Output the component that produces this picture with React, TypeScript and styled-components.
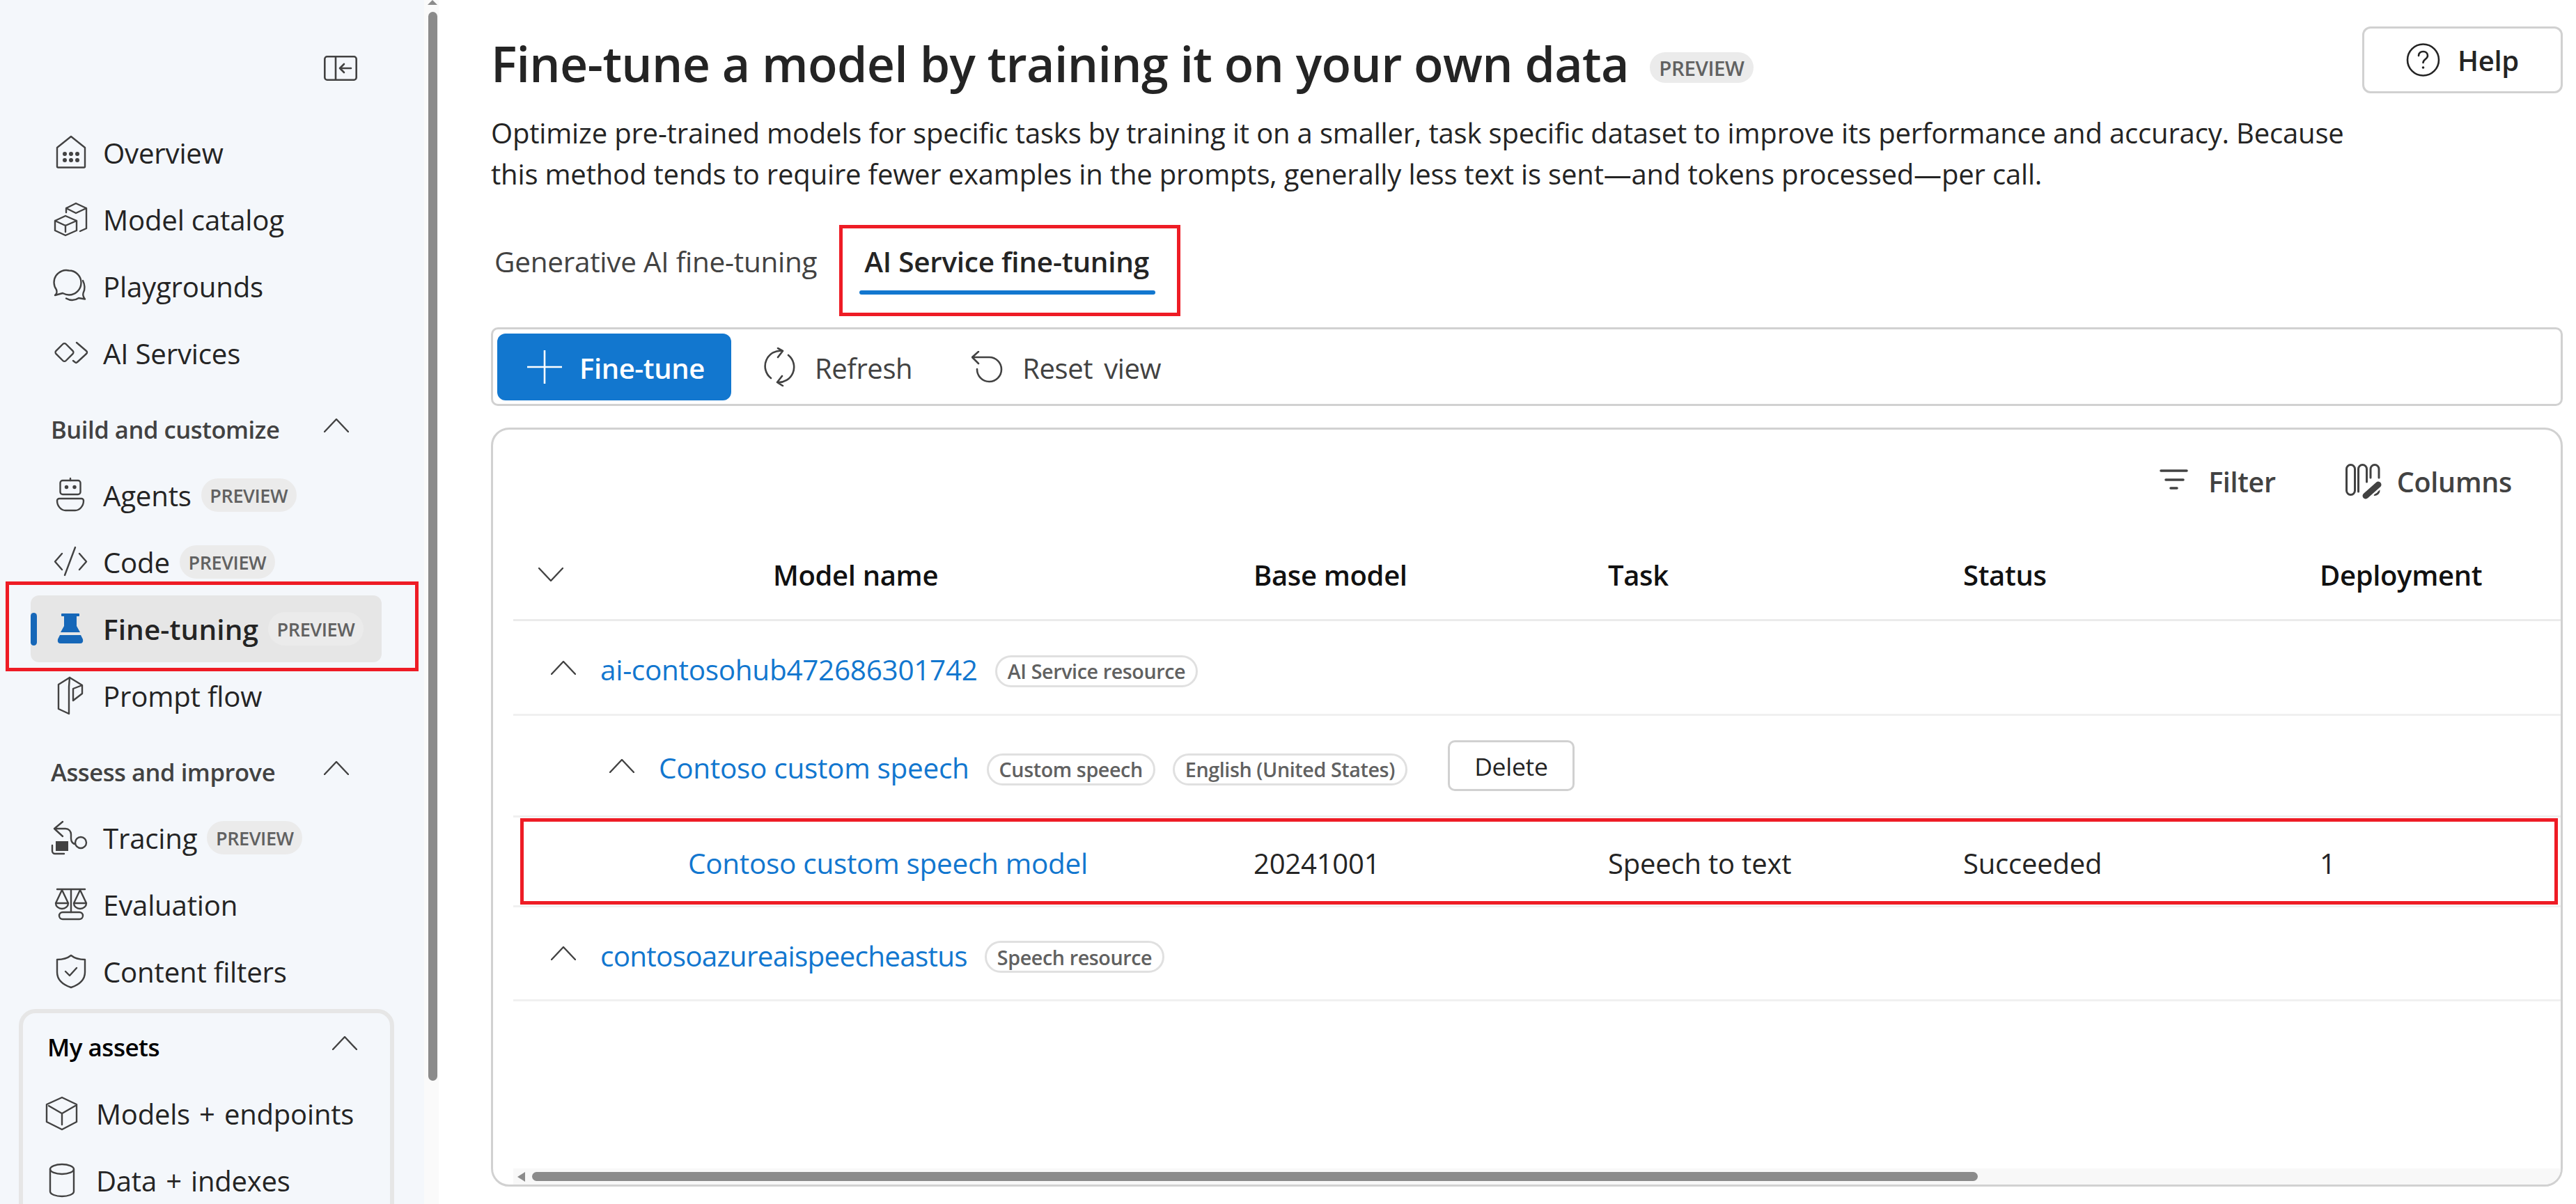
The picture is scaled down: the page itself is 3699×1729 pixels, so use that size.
import React from "react";
import styled, { createGlobalStyle, css } from "styled-components";

const Global = createGlobalStyle`
  html, body { margin: 0; padding: 0; background: #fff; overflow: hidden; }
  * { box-sizing: border-box; }
  body { font-family: "Open Sans", "Noto Sans", "Liberation Sans", sans-serif; color: #242424; }
`;

const Page = styled.div`
  position: relative; width: 3699px; height: 1729px; display: flex; overflow: hidden; background: #fff;
`;
const Sidebar = styled.aside`
  flex: 0 0 609px; height: 100%; background: #f4f7fb; overflow: hidden; display: flex; flex-direction: column;
`;
const SideTop = styled.div`
  height: 171px; padding: 80px 0 0 465px; flex: none;
`;
const NavList = styled.nav`
  display: flex; flex-direction: column; padding-left: 44px; flex: none;
`;
const NavItem = styled.div<{ $active?: boolean }>`
  flex: none; display: flex; align-items: center; gap: 22px; width: 504px; height: 96px; padding-left: 34px;
  position: relative; border-radius: 12px; white-space: nowrap;
  font-size: ${p => (p.$active ? "40.5px" : "40.2px")};
  letter-spacing: ${p => (p.$active ? "0.1px" : "-0.2px")};
  font-weight: ${p => (p.$active ? 600 : 400)};
  background: ${p => (p.$active ? "#e6e6e6" : "transparent")};
  svg { flex: none; }
`;
const ActiveBar = styled.span`
  position: absolute; left: 0; top: 25px; width: 9px; height: 47px; border-radius: 5px; background: #1667b8;
`;
const Preview = styled.span`
  display: inline-flex; align-items: center; justify-content: center; height: 48px; width: 137px; margin-left: -8px;
  border-radius: 24px; background: #ebebeb; color: #616161; font-size: 27px; font-weight: 600; letter-spacing: -0.4px;
`;
const SectionHead = styled.div<{ $h: number }>`
  flex: none; height: ${p => p.$h}px; padding: 14px 0 0 29px; width: 504px; display: flex; align-items: center; gap: 0;
  color: #424242; font-size: 34.6px; font-weight: 600; letter-spacing: -0.45px; position: relative;
  span { flex: 0 0 392px; }
  svg { margin-bottom: 10px; }
`;
const AssetsBox = styled.section`
  flex: none; margin: 6px 0 0 27px; width: 539px; height: 400px; border: 6px solid #e6e6e6; border-radius: 24px;
  padding: 0 0 0 32px;
`;
const AssetsHead = styled.div`
  height: 96px; display: flex; align-items: center; padding-left: 3px; color: #000; font-size: 35px; font-weight: 600;
  letter-spacing: -0.5px;
  span { flex: 0 0 409px; }
  svg { margin-bottom: 10px; }
`;
const AssetItem = styled.div`
  height: 96px; display: flex; align-items: center; gap: 25px; font-size: 40px; letter-spacing: -0.2px; word-spacing: 3px; white-space: nowrap;
`;
const VScroll = styled.div`
  flex: 0 0 21px; height: 100%; background: #fafafa; padding: 0 2px 0 5px; display: flex; flex-direction: column; align-items: center;
`;
const VArrow = styled.span`
  width: 0; height: 0; flex: none; border-left: 7px solid transparent; border-right: 7px solid transparent;
  border-bottom: 7px solid #8b8b8b; margin-bottom: 10px;
`;
const VThumb = styled.span`
  width: 13px; height: 1535px; background: #8b8b8b; border-radius: 7px; flex: none;
`;

const Main = styled.main`
  flex: 1; min-width: 0; padding: 38px 19px 0 75px; display: flex; flex-direction: column;
`;
const Head = styled.header`
  display: flex; justify-content: space-between; align-items: flex-start; flex: none;
`;
const TitleRow = styled.div`
  display: flex; align-items: center; gap: 30px; height: 105px;
`;
const Title = styled.h1`
  margin: 0; font-size: 69.8px; font-weight: 600; letter-spacing: -0.65px; color: #242424; white-space: nowrap;
`;
const TitleChip = styled.span`
  display: inline-flex; align-items: center; justify-content: center; width: 149px; height: 44px; border-radius: 22px;
  background: #ebebeb; color: #616161; font-size: 29.5px; font-weight: 600; letter-spacing: -0.4px; margin-top: 13px;
`;
const Description = styled.p`
  margin: 18px 0 0; font-size: 40px; line-height: 59px; color: #242424; white-space: nowrap; letter-spacing: -0.17px;
`;
const HelpButton = styled.button`
  flex: none; width: 288px; height: 96px; border: 3px solid #d1d1d1; border-radius: 12px; background: #fff;
  display: flex; align-items: center; justify-content: center; gap: 25px; font: 600 40px "Open Sans", sans-serif; color: #242424; letter-spacing: -0.3px;
`;
const Tabs = styled.div`
  display: flex; gap: 54px; margin: 60px 0 0 -2px; height: 84px; flex: none;
`;
const Tab = styled.div<{ $active?: boolean }>`
  position: relative; padding: 0 7px; height: 76px; line-height: 74px; font-size: 40.5px; letter-spacing: -0.27px; white-space: nowrap;
  color: ${p => (p.$active ? "#242424" : "#424242")};
  font-weight: ${p => (p.$active ? 600 : 400)};
  ${p => p.$active && css`
    &::after { content: ""; position: absolute; left: 0; right: -2px; bottom: -8px; height: 6px; border-radius: 3px; background: #1277cf; }
  `}
`;
const Toolbar = styled.div`
  flex: none; margin-top: 47px; height: 113px; border: 3px solid #d1d1d1; border-radius: 10px; padding: 6px; display: flex; align-items: center;
`;
const PrimaryButton = styled.button`
  flex: none; width: 336px; height: 96px; border: 0; border-radius: 12px; background: #1277cf; color: #fff; margin-right: 47px;
  display: flex; align-items: center; padding: 0 0 0 43px; gap: 25px; font: 600 40px "Open Sans", sans-serif; letter-spacing: -0.4px;
`;
const ToolButton = styled.button`
  flex: none; border: 0; background: none; padding: 0; margin-right: 85px; display: flex; align-items: center; gap: 27px;
  font: 500 40px "Open Sans", sans-serif; color: #424242; letter-spacing: -0.4px; word-spacing: 6px;
`;
const ToolLabel = styled.span`
  margin-top: 3px;
`;
const Card = styled.section`
  flex: none; margin-top: 31px; height: 1090px; border: 3px solid #d1d1d1; border-radius: 26px; padding-left: 29px;
  display: flex; flex-direction: column; overflow: hidden;
`;
const CardTools = styled.div`
  flex: none; height: 144px; padding: 47px 70px 0 0; display: flex; justify-content: flex-end; align-items: flex-start; gap: 100px;
`;
const CardTool = styled.div`
  height: 56px; display: flex; align-items: center; color: #424242; font-size: 39.5px; font-weight: 600; letter-spacing: -0.3px; gap: 22px;
`;
const FilterGlyph = styled.svg`
  margin: -6px 7px 0 0;
`;
const columns = "1063px 509px 510px 512px 1fr";
const HeaderRow = styled.div`
  flex: none; height: 131px; display: grid; grid-template-columns: ${columns}; align-items: center;
  border-bottom: 3px solid #ebebeb; font-size: 40px; font-weight: 600; color: #111; letter-spacing: -0.35px;
`;
const HeaderFirst = styled.div`
  display: flex; align-items: center; padding-left: 36px; gap: 301px;
`;
const GroupRow = styled.div<{ $indent: number; $h: number }>`
  flex: none; height: ${p => p.$h}px; padding: 6px 0 0 ${p => p.$indent}px; display: flex; align-items: center; border-bottom: 3px solid #f0f0f0;
  svg { flex: none; margin: -6px 35px 0 0; }
`;
const ModelRow = styled.div`
  flex: none; height: 129px; padding-top: 5px; display: grid; grid-template-columns: ${columns}; align-items: center;
  border-bottom: 3px solid #f0f0f0; font-size: 40px; letter-spacing: -0.2px; color: #242424;
`;
const LinkText = styled.a<{ $first?: boolean; $tight?: boolean }>`
  color: #1277cf; font-size: 40.5px; letter-spacing: ${p => (p.$tight ? "-0.75px" : "-0.3px")}; white-space: nowrap;
  ${p => p.$first && css`padding-left: 251px;`}
`;
const Chip = styled.span`
  flex: none; display: inline-flex; align-items: center; height: 46px; padding: 0 15px; margin: 4px 0 0 25px;
  border: 3px solid #e0e0e0; border-radius: 23px; font-size: 28.7px; font-weight: 600; color: #616161; letter-spacing: -0.4px; white-space: nowrap;
`;
const DeleteButton = styled.button`
  flex: none; width: 182px; height: 73px; margin: -6px 0 0 58px; border: 3px solid #d1d1d1; border-radius: 10px; background: #fff;
  font: 500 35.5px "Open Sans", sans-serif; color: #242424; letter-spacing: -0.3px;
`;
const HScroll = styled.div`
  margin-top: auto; flex: none; height: 23px; background: #f8f8f8; display: flex; align-items: center; padding-left: 6px; gap: 10px;
`;
const HArrow = styled.span`
  width: 0; height: 0; border-top: 7px solid transparent; border-bottom: 7px solid transparent; border-right: 11px solid #8b8b8b;
`;
const HThumb = styled.span`
  width: 2076px; height: 13px; border-radius: 7px; background: #8b8b8b;
`;

const highlight = css`
  position: absolute; border: 5px solid #ee1c25; pointer-events: none;
`;
const NavHighlight = styled.div`${highlight} left: 8px; top: 835px; width: 593px; height: 129px;`;
const TabHighlight = styled.div`${highlight} left: 1205px; top: 323px; width: 490px; height: 131px;`;
const RowHighlight = styled.div`${highlight} left: 747px; top: 1175px; width: 2926px; height: 124px;`;

type IconProps = { children: React.ReactNode };
const IconSvg = styled.svg`
  overflow: visible;
`;
const Ico = ({ children }: IconProps) => (
  <IconSvg width="48" height="48" viewBox="0 0 48 48" fill="none" stroke="#424242" strokeWidth="2.4" strokeLinejoin="round" strokeLinecap="round">
    {children}
  </IconSvg>
);
const Chevron = ({ down }: { down?: boolean }) => (
  <svg width="36" height="20" viewBox="0 0 36 20" fill="none" stroke="#424242" strokeWidth="2.4" strokeLinecap="round" strokeLinejoin="round">
    <path d={down ? "M1 1 L18 19 L35 1" : "M1 19 L18 1 L35 19"} />
  </svg>
);

const icons: Record<string, React.ReactNode> = {
  overview: (
    <>
      <path d="M24 1 L44 17 V44 a1.5 1.5 0 0 1 -1.5 1.5 H5.500 a1.5 1.5 0 0 1 -1.5 -1.500 V17 Z" />
      <g fill="#424242" stroke="none">
        <circle cx="15" cy="26" r="3" /><circle cx="24" cy="26" r="3" /><circle cx="33" cy="26" r="3" />
        <circle cx="15" cy="35" r="3" /><circle cx="24" cy="35" r="3" /><circle cx="33" cy="35" r="3" />
      </g>
    </>
  ),
  catalog: (
    <>
      <path d="M16 19 L1 26 V40 L16 47 L32 40 V26 Z M1 26 L16 33 L32 26 M16 33 V42" />
      <path d="M17 14 V8 L31 1 L46 8 V37 L37 41 M17 8 L31 15 L46 8" />
    </>
  ),
  playgrounds: (
    <>
      <path d="M21 1.500 a17.500 17.500 0 0 1 0 35 c-3 0 -6 -1 -9 -2.500 L1 37 c2.500 -2 3 -5 2 -8 A17.500 17.500 0 0 1 21 1.500 Z" />
      <path d="M41 16 c3 6 3.500 12 .5 18 c-.7 2.500 -.3 5 2.500 8.500 l-9 -1.500 c-6 4 -12 4 -18 .5" />
    </>
  ),
  services: (
    <>
      <rect x="4.500" y="13" width="20" height="20" rx="3" transform="rotate(45 14.500 23)" />
      <path d="M32 9 L46 21 a2.500 2.500 0 0 1 0 4 L33 37 a2.500 2.500 0 0 1 -3.500 0 L27 35" />
    </>
  ),
  agents: (
    <>
      <rect x="8.500" y="3" width="29" height="20" rx="3.500" />
      <path d="M23 0 V3" />
      <circle cx="17.500" cy="12.500" r="2.700" fill="#424242" stroke="none" />
      <circle cx="29" cy="12.500" r="2.700" fill="#424242" stroke="none" />
      <path d="M7 29 H39 a3 3 0 0 1 3 3 c0 8 -6 14 -12 14 H16 C10 46 4 40 4 32 a3 3 0 0 1 3 -3 Z" />
    </>
  ),
  code: <path d="M11 12 L1 23.500 L11 35 M30 3 L15 43 M36 12 L46 23.500 L36 35" />,
  flask: (
    <g fill="#1667b8" stroke="none">
      <rect x="10" y="2" width="26" height="4" rx="1" />
      <path d="M14 6 H32 V20 L37 29 H9 L14 20 Z" />
      <path d="M8 33 H38 L41 39 Q42 45 37 45 H9 Q4 45 5 39 Z" />
    </g>
  ),
  prompt: (
    <>
      <path d="M22 -2 L6 8 V43 L21 50 V11 Z" />
      <path d="M22 -2 L40 9 V21 L27 31 V14 L40 9" />
    </>
  ),
  tracing: (
    <>
      <path d="M12 1 L0 11 L12 22 M0 11 H16 c5 0 8 4 8 8 V25 c0 5 3 8 6 8" />
      <circle cx="38" cy="31" r="8" />
      <rect x="2" y="29" width="18" height="14" fill="#424242" stroke="none" />
      <path d="M-3 35 V43 a4 4 0 0 0 4 4 H14" />
    </>
  ),
  evaluation: (
    <>
      <path d="M4 2 H44 M24 2 V35" />
      <path d="M11 3 L2 22 H20 Z M2 22 a9 8 0 0 0 18 0" />
      <path d="M37 3 L28 22 H46 Z M28 22 a9 8 0 0 0 18 0" />
      <rect x="7" y="35" width="34" height="10" rx="5" />
    </>
  ),
  shield: (
    <>
      <path d="M24 1 C29 5 36 7 44 7 V25 C44 36 36 43 24 47 C12 43 4 36 4 25 V7 C12 7 19 5 24 1 Z" />
      <path d="M16 24 L22 30 L32 19" />
    </>
  ),
  cube: <path d="M24 1 L45 11 V36 L24 47 L2 36 V11 Z M5 13 L24 24 L43 13 M24 24 V40" />,
  data: (
    <>
      <ellipse cx="24" cy="8" rx="17" ry="7" />
      <path d="M7 8 V40 c0 4 8 7 17 7 s17 -3 17 -7 V8" />
    </>
  ),
};

const Toggle = () => (
  <svg width="48" height="36" viewBox="0 0 48 36" fill="none" stroke="#424242" strokeWidth="2.600" strokeLinecap="round" strokeLinejoin="round">
    <rect x="1.300" y="1.300" width="45.400" height="33.400" rx="3.500" />
    <path d="M17 1.500 V34.500 M39 18 H23 M29 12 L23 18 L29 24" />
  </svg>
);
const PlusIcon = () => (
  <svg width="50" height="48" viewBox="0 0 50 48" stroke="#fff" strokeWidth="2.600" fill="none"><path d="M25 0 V48 M0 24 H50" /></svg>
);
const RefreshIcon = () => (
  <svg width="46" height="56" viewBox="0 0 46 56" fill="none" stroke="#424242" strokeWidth="2.600" strokeLinecap="round" strokeLinejoin="round">
    <path d="M27 5 A22 22 0 0 0 10 44 M20 1 L27 5 L20 14 M19 50 A22 22 0 0 0 35 11 M26 41 L19 50 L27 55" />
  </svg>
);
const ResetIcon = () => (
  <svg width="46" height="46" viewBox="0 0 46 46" fill="none" stroke="#424242" strokeWidth="2.600" strokeLinecap="round" strokeLinejoin="round">
    <path d="M1 9 H25 A17.500 17.500 0 1 1 8 26 M10 1 L1 9 L10 18" />
  </svg>
);
const FilterIcon = () => (
  <FilterGlyph width="41" height="30" viewBox="0 0 41 30" stroke="#424242" strokeWidth="3.500" fill="none" strokeLinecap="round">
    <path d="M2 2 H39 M9 15 H34 M16 27 H25" />
  </FilterGlyph>
);
const ColumnsIcon = () => (
  <svg width="52" height="52" viewBox="0 0 52 52" fill="none" stroke="#424242" strokeWidth="3" strokeLinecap="round">
    <rect x="1.500" y="1.500" width="12" height="43" rx="6" />
    <path d="M18.500 40 V7.500 a6 6 0 0 1 12 0 V26" />
    <path d="M36 20 V7.500 a6 6 0 0 1 12 0 V20" />
    <path d="M48 38 a6 6 0 0 1 -6 6.500" />
    <path d="M29 46 L48 30" stroke="#fff" strokeWidth="13" />
    <path d="M29 46 L47 30" strokeWidth="9" />
  </svg>
);
const HelpIcon = () => (
  <svg width="49" height="48" viewBox="0 0 49 48" fill="none" stroke="#242424" strokeWidth="2.600" strokeLinecap="round">
    <circle cx="24.500" cy="24" r="22.500" />
    <path d="M18 18 c0 -4 3 -6 6.500 -6 c4 0 6.500 2.500 6.500 6 c0 5 -6.500 5 -6.500 10" />
    <circle cx="24.500" cy="35" r="1.800" fill="#242424" stroke="none" />
  </svg>
);

const nav1 = [
  { icon: "overview", label: "Overview" },
  { icon: "catalog", label: "Model catalog" },
  { icon: "playgrounds", label: "Playgrounds" },
  { icon: "services", label: "AI Services" },
];
const nav3 = [
  { icon: "tracing", label: "Tracing", preview: true },
  { icon: "evaluation", label: "Evaluation" },
  { icon: "shield", label: "Content filters" },
];

const Row = ({ icon, label, preview, active }: { icon: string; label: string; preview?: boolean; active?: boolean }) => (
  <NavItem $active={active}>
    {active && <ActiveBar />}
    <Ico>{icons[icon]}</Ico>
    <span>{label}</span>
    {preview && <Preview>PREVIEW</Preview>}
  </NavItem>
);

export default function App() {
  return (
    <Page>
      <Global />
      <Sidebar>
        <SideTop><Toggle /></SideTop>
        <NavList>
          {nav1.map(n => <Row key={n.label} {...n} />)}
          <SectionHead $h={108}><span>Build and customize</span><Chevron /></SectionHead>
          <Row icon="agents" label="Agents" preview />
          <Row icon="code" label="Code" preview />
          <Row icon="flask" label="Fine-tuning" preview active />
          <Row icon="prompt" label="Prompt flow" />
          <SectionHead $h={108}><span>Assess and improve</span><Chevron /></SectionHead>
          {nav3.map(n => <Row key={n.label} {...n} />)}
        </NavList>
        <AssetsBox>
          <AssetsHead><span>My assets</span><Chevron /></AssetsHead>
          <AssetItem><Ico>{icons.cube}</Ico><span>Models + endpoints</span></AssetItem>
          <AssetItem><Ico>{icons.data}</Ico><span>Data + indexes</span></AssetItem>
        </AssetsBox>
      </Sidebar>
      <VScroll><VArrow /><VThumb /></VScroll>
      <Main>
        <Head>
          <div>
            <TitleRow>
              <Title>Fine-tune a model by training it on your own data</Title>
              <TitleChip>PREVIEW</TitleChip>
            </TitleRow>
            <Description>
              Optimize pre-trained models for specific tasks by training it on a smaller, task specific dataset to improve its performance and accuracy. Because<br />
              this method tends to require fewer examples in the prompts, generally less text is sent—and tokens processed—per call.
            </Description>
          </div>
          <HelpButton><HelpIcon />Help</HelpButton>
        </Head>
        <Tabs>
          <Tab>Generative AI fine-tuning</Tab>
          <Tab $active>AI Service fine-tuning</Tab>
        </Tabs>
        <Toolbar>
          <PrimaryButton><PlusIcon /><ToolLabel>Fine-tune</ToolLabel></PrimaryButton>
          <ToolButton><RefreshIcon /><ToolLabel>Refresh</ToolLabel></ToolButton>
          <ToolButton><ResetIcon /><ToolLabel>Reset view</ToolLabel></ToolButton>
        </Toolbar>
        <Card>
          <CardTools>
            <CardTool><FilterIcon />Filter</CardTool>
            <CardTool><ColumnsIcon />Columns</CardTool>
          </CardTools>
          <HeaderRow>
            <HeaderFirst><Chevron down /><span>Model name</span></HeaderFirst>
            <span>Base model</span><span>Task</span><span>Status</span><span>Deployment</span>
          </HeaderRow>
          <GroupRow $indent={54} $h={136}>
            <Chevron /><LinkText>ai-contosohub472686301742</LinkText><Chip>AI Service resource</Chip>
          </GroupRow>
          <GroupRow $indent={138} $h={146}>
            <Chevron /><LinkText>Contoso custom speech</LinkText><Chip>Custom speech</Chip><Chip>English (United States)</Chip>
            <DeleteButton>Delete</DeleteButton>
          </GroupRow>
          <ModelRow>
            <LinkText $first>Contoso custom speech model</LinkText>
            <span>20241001</span><span>Speech to text</span><span>Succeeded</span><span>1</span>
          </ModelRow>
          <GroupRow $indent={54} $h={135}>
            <Chevron /><LinkText $tight>contosoazureaispeecheastus</LinkText><Chip>Speech resource</Chip>
          </GroupRow>
          <HScroll><HArrow /><HThumb /></HScroll>
        </Card>
      </Main>
      <NavHighlight />
      <TabHighlight />
      <RowHighlight />
    </Page>
  );
}
